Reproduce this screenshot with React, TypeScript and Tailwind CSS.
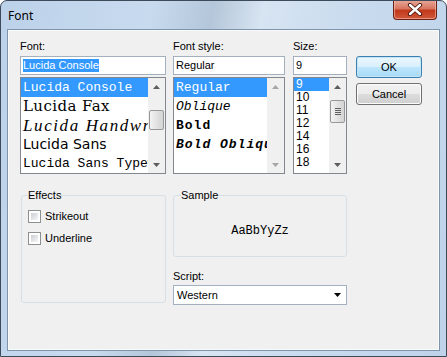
const sans = "font-['Liberation_Sans',Arial,sans-serif]";
const mono = "font-['Liberation_Mono','DejaVu_Sans_Mono',monospace]";

function Arrow({ up, color = "#5d5d5d" }: { up?: boolean; color?: string }) {
  return (
    <svg width="7" height="4" viewBox="0 0 7 4">
      <polygon points={up ? "3.5,0 7,4 0,4" : "0,0 7,0 3.5,4"} fill={color} />
    </svg>
  );
}

function Grip() {
  return (
    <div className="flex flex-col items-center gap-[1px]">
      {[0, 1, 2, 3].map((i) => (
        <div key={i} className="h-[1px] w-[6px] bg-[#5f5f5f]" />
      ))}
    </div>
  );
}

function ScrollBar({ thumb, disabled }: { thumb?: string; disabled?: boolean }) {
  const c = disabled ? "#a6a6a6" : "#5d5d5d";
  return (
    <div className="flex w-[17px] shrink-0 flex-col bg-[#f0f0f0]">
      <div className="flex h-[17px] items-center justify-center">
        <Arrow up color={c} />
      </div>
      <div className="flex-1 px-[1px]">
        {thumb === "font" && (
          <div className="mt-[15px] h-[20px] rounded-[2px] border border-[#979797] bg-[linear-gradient(90deg,#f3f3f3,#e2e2e2_50%,#d4d4d4)]" />
        )}
        {thumb === "size" && (
          <div className="mt-[5px] flex h-[23px] items-center justify-center rounded-[2px] border border-[#979797] bg-[linear-gradient(90deg,#f3f3f3,#e2e2e2_50%,#d4d4d4)]">
            <Grip />
          </div>
        )}
      </div>
      <div className="flex h-[17px] items-center justify-center">
        <Arrow color={c} />
      </div>
    </div>
  );
}

function Input({ children, w }: { children: React.ReactNode; w: string }) {
  return (
    <div className={`${w} flex h-[19px] items-center border border-[#a4b0be] bg-white px-[2px] text-[11px] text-black`}>
      {children}
    </div>
  );
}

const fonts = [
  { name: "Lucida Console", cls: `${mono} text-[13px]` },
  { name: "Lucida Fax", cls: "font-['DejaVu_Serif',serif] text-[15px] tracking-[0.4px]" },
  { name: "Lucida Handwriting", cls: "font-['Liberation_Serif',serif] italic text-[17px] tracking-[1.6px]" },
  { name: "Lucida Sans", cls: "font-['DejaVu_Sans',sans-serif] text-[14px]" },
  { name: "Lucida Sans Typewriter", cls: `${mono} text-[13px]` },
];

const styles = [
  { name: "Regular", cls: "" },
  { name: "Oblique", cls: "italic" },
  { name: "Bold", cls: "font-bold tracking-[1px]" },
  { name: "Bold Oblique", cls: "font-bold italic tracking-[1px]" },
];

const sizes = ["9", "10", "11", "12", "14", "16", "18"];

function Button({ children, def }: { children: React.ReactNode; def?: boolean }) {
  return (
    <button
      className={
        def
          ? "flex h-[22px] w-[66px] items-center justify-center rounded-[3px] border border-[#3c7fb1] bg-[linear-gradient(#eaf6fd,#d9f0fc_50%,#bee6fd_50%,#a7d9f5)] text-[11px] text-black shadow-[inset_0_0_0_1px_#c4e5f6]"
          : "flex h-[22px] w-[66px] items-center justify-center rounded-[3px] border border-[#707070] bg-[linear-gradient(#f2f2f2,#ebebeb_50%,#dddddd_50%,#cfcfcf)] text-[11px] text-black shadow-[inset_0_0_0_1px_#fcfcfc]"
      }
    >
      {children}
    </button>
  );
}

function Checkbox({ label }: { label: string }) {
  return (
    <div className="flex h-[13px] items-center gap-[4px]">
      <div className="h-[13px] w-[13px] border border-[#8e8f8f] bg-white p-[2px]">
        <div className="h-full w-full bg-[linear-gradient(135deg,#cbcfd5,#f6f6f6)]" />
      </div>
      <span className="text-[11px] text-black">{label}</span>
    </div>
  );
}

export default function App() {
  return (
    <div className={`${sans} h-[357px] w-[447px] overflow-hidden rounded-t-[7px] border border-[#3d4a5a] bg-[linear-gradient(100deg,#bcd2ea_0%,#c8daee_30%,#b4c6d9_42%,#d7e4f2_52%,#c9dbee_70%,#bed3ea_100%)]`}>
      <div className="flex h-[28px] items-start justify-between">
        <div className="pl-[7px] pt-[7px] font-['Noto_Sans',sans-serif] text-[12px] leading-[16px] text-black">Font</div>
        <div className="mr-[9px] -mt-[1px] flex h-[20px] w-[44px] items-center justify-center rounded-b-[4px] border border-t-0 border-[#6b2216] bg-[linear-gradient(#e9a99a,#d87761_45%,#c2391b_55%,#d0583a)] shadow-[inset_0_0_0_1px_rgba(255,210,200,0.5)]">
          <svg width="16" height="13" viewBox="0 0 16 13">
            <path d="M3 2 L13 11 M13 2 L3 11" stroke="#4a1409" strokeWidth="4.2" strokeLinecap="round" />
            <path d="M3 2 L13 11 M13 2 L3 11" stroke="#ffffff" strokeWidth="2.4" strokeLinecap="round" />
          </svg>
        </div>
      </div>

      <div className="mx-[6px] h-[322px] border border-[#7f93aa] bg-[#f0f0f0] pl-[12px] pt-[10px] text-black shadow-[inset_0_0_0_1px_#f8fbfe]">
        <div className="flex items-start">
          <div className="w-[146px]">
            <div className="h-[16px] text-[11px] leading-[13px]">Font:</div>
            <Input w="w-[146px]">
              <span className="bg-[#3399ff] leading-[13px] text-white">Lucida Console</span>
            </Input>
            <div className="mt-[2px] flex h-[97px] border border-[#828790] bg-white">
              <div className="min-w-0 flex-1 overflow-hidden">
                {fonts.map((f, i) => (
                  <div
                    key={f.name}
                    className={`${f.cls} h-[19px] whitespace-nowrap px-[2px] leading-[19px] ${i === 0 ? "bg-[#3399ff] text-white" : "text-black"}`}
                  >
                    {f.name}
                  </div>
                ))}
              </div>
              <ScrollBar thumb="font" />
            </div>
          </div>

          <div className="ml-[7px] w-[112px]">
            <div className="h-[16px] text-[11px] leading-[13px]">Font style:</div>
            <Input w="w-[112px]">Regular</Input>
            <div className="mt-[2px] flex h-[97px] border border-[#828790] bg-white">
              <div className="min-w-0 flex-1 overflow-hidden">
                {styles.map((s, i) => (
                  <div
                    key={s.name}
                    className={`${mono} ${s.cls} h-[19px] whitespace-nowrap px-[2px] text-[13px] leading-[19px] ${i === 0 ? "bg-[#3399ff] text-white" : "text-black"}`}
                  >
                    {s.name}
                  </div>
                ))}
              </div>
              <ScrollBar disabled />
            </div>
          </div>

          <div className="ml-[8px] w-[54px]">
            <div className="h-[16px] text-[11px] leading-[13px]">Size:</div>
            <Input w="w-[54px]">9</Input>
            <div className="mt-[2px] flex h-[97px] border border-[#828790] bg-white">
              <div className="min-w-0 flex-1 overflow-hidden">
                {sizes.map((s, i) => (
                  <div
                    key={s}
                    className={`h-[13px] px-[2px] text-[12px] leading-[13px] ${i === 0 ? "bg-[#3399ff] text-white" : "text-black"}`}
                  >
                    {s}
                  </div>
                ))}
              </div>
              <ScrollBar thumb="size" />
            </div>
          </div>

          <div className="ml-[9px] mt-[16px] flex flex-col gap-[5px]">
            <Button def>OK</Button>
            <Button>Cancel</Button>
          </div>
        </div>

        <div className="mt-[15px] flex items-start">
          <fieldset className="ml-[1px] h-[114px] w-[145px] rounded-[3px] border border-[#d5dfe5] px-[6px]">
            <legend className="px-0 text-[11px] leading-[13px]">Effects</legend>
            <div className="mt-[8px] flex flex-col gap-[9px]">
              <Checkbox label="Strikeout" />
              <Checkbox label="Underline" />
            </div>
          </fieldset>

          <div className="ml-[7px] w-[174px]">
            <fieldset className="flex h-[68px] w-[174px] flex-col rounded-[3px] border border-[#d5dfe5] px-[7px]">
              <legend className="px-0 text-[11px] leading-[13px]">Sample</legend>
              <div className={`${mono} flex flex-1 items-center justify-center pt-[4px] text-[12px] text-black`}>AaBbYyZz</div>
            </fieldset>
            <div className="mt-[13px] h-[15px] text-[11px] leading-[13px]">Script:</div>
            <div className="flex h-[20px] w-[174px] items-center justify-between border border-[#a4b0be] bg-white pl-[3px] pr-[5px] text-[11px]">
              <span>Western</span>
              <Arrow color="#000000" />
            </div>
          </div>
        </div>
      </div>
    </div>
  );
}
